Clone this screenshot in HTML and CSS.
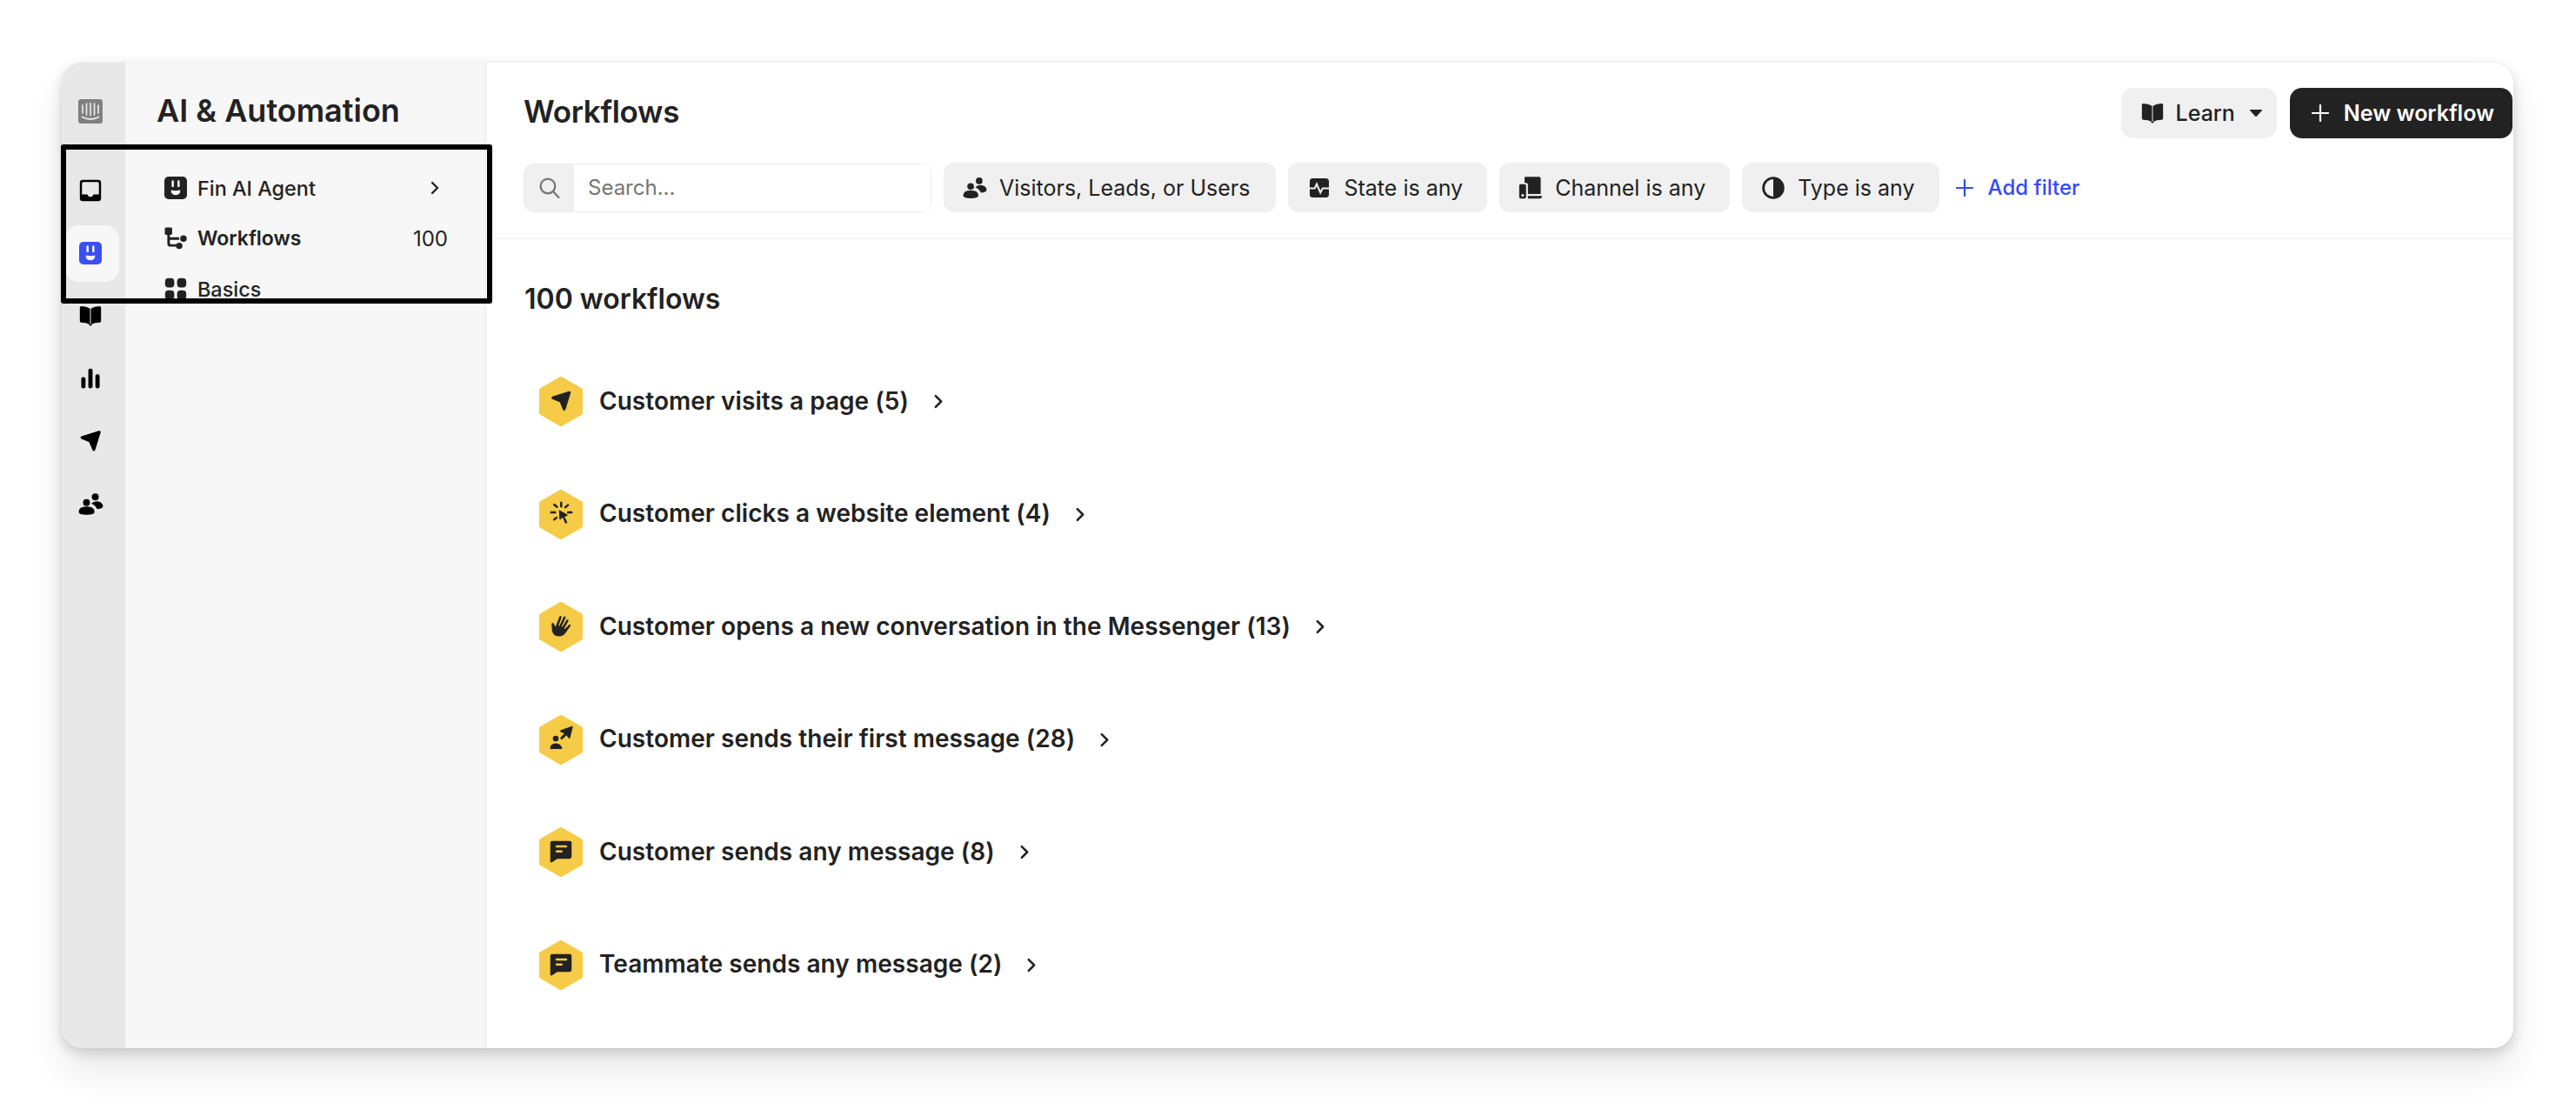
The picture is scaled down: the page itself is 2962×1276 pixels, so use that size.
FILE: index.html
```html
<!DOCTYPE html>
<html lang="en">
<head>
    <meta charset="UTF-8">
    <title>Workflows</title>
    <link rel="stylesheet" href="styles.css">
</head>
<body>
    <!-- Icon sprite -->
    <svg class="sprite" xmlns="http://www.w3.org/2000/svg">
        <symbol id="i-logo" viewBox="0 0 28 28">
            <rect width="28" height="28" rx="3" fill="#808080"/>
            <path d="M5 7v9M9.500 5v13M14 4.500v14M18.500 5v13M23 7v9" stroke="#e8e8e8" stroke-width="1.700" stroke-linecap="round" fill="none"/>
            <path d="M4.500 20.500q9.500 5 19 0" stroke="#e8e8e8" stroke-width="1.800" stroke-linecap="round" fill="none"/>
        </symbol>
        <symbol id="i-inbox" viewBox="0 0 16 16">
            <path fill-rule="evenodd" d="M2.500.5h11a2 2 0 0 1 2 2v11a2 2 0 0 1-2 2h-11a2 2 0 0 1-2-2v-11a2 2 0 0 1 2-2zM3 2a1 1 0 0 0-1 1v7.800h3.800q.6 1.700 2.200 1.700t2.200-1.700H14V3a1 1 0 0 0-1-1z"/>
        </symbol>
        <symbol id="i-fin" viewBox="0 0 16 16">
            <rect width="16" height="16" rx="3"/>
            <path fill="#fff" d="M5.200 3.400a.75.75 0 0 1 1.500 0v3.300a.75.75 0 0 1-1.500 0zM9.300 3.400a.75.75 0 0 1 1.500 0v3.300a.75.75 0 0 1-1.500 0zM4.800 9.500q3.200 1 6.400 0 .4 3.300-3.200 3.500-3.600-.2-3.200-3.500z"/>
        </symbol>
        <symbol id="i-book" viewBox="0 0 16 16">
            <path d="M.5 2.300q0-1 1-1 3.600 0 6.200 1.600v11.200q-2.800-1.400-6.200-1.400-1 0-1-1zM15.500 2.300q0-1-1-1-3.600 0-6.200 1.600v11.200q2.800-1.400 6.200-1.400 1 0 1-1z"/>
            <path d="M6.500 14h3L8 15.200z"/>
        </symbol>
        <symbol id="i-chart" viewBox="0 0 16 16">
            <rect x="1.500" y="7" width="3" height="8" rx="1.300"/>
            <rect x="6.500" y="1" width="3" height="14" rx="1.300"/>
            <rect x="11.500" y="5" width="3" height="10" rx="1.300"/>
        </symbol>
        <symbol id="i-send" viewBox="0 0 16 16">
            <path d="M14.200 1.800 2 5.600 7.800 8l2.600 6z" stroke="currentColor" stroke-width="2" stroke-linejoin="round"/>
        </symbol>
        <symbol id="i-people" viewBox="0 0 16 16">
            <circle cx="5.200" cy="7" r="2.200"/>
            <circle cx="10.800" cy="3.400" r="2.200"/>
            <path d="M.3 13q0-3.500 5-3.500t5 3.500q0 1.800-5 1.800t-5-1.800zM8.200 7.600q2.200-1.800 4.500-1.300 2.800.6 3 3 .1 1.700-3.800 1.900-.8-2.300-3.700-3.600z"/>
        </symbol>
        <symbol id="i-flow" viewBox="0 0 16 16">
            <rect x=".3" y=".3" width="5.200" height="5.200" rx="1"/>
            <path d="M3 5v6.500q0 1.500 1.500 1.500h4M3 8.200h7.500" stroke="currentColor" stroke-width="1.800" fill="none"/>
            <circle cx="13.500" cy="8.200" r="2.300"/>
            <circle cx="10.500" cy="13.300" r="2.300"/>
        </symbol>
        <symbol id="i-grid" viewBox="0 0 16 16">
            <rect x=".5" y=".5" width="6.500" height="6.500" rx="2.400"/>
            <rect x="9" y=".5" width="6.500" height="6.500" rx="2.400"/>
            <rect x=".5" y="9" width="6.500" height="6.500" rx="2.400"/>
            <rect x="9" y="9" width="6.500" height="6.500" rx="2.400"/>
        </symbol>
        <symbol id="i-state" viewBox="0 0 16 16">
            <rect x="1.700" y="1.700" width="12.600" height="12.600" rx="2"/>
            <path d="M1.700 8.300H5l1.300-2.800 2.400 5.600 1.500-2.800h4.100" stroke="#f0f0f0" stroke-width="1.200" fill="none"/>
        </symbol>
        <symbol id="i-channel" viewBox="0 0 16 16">
            <path d="M4 1.500q0-.8.800-.8h8.800q1 0 1 1V12H6.200V6q0-1.300-1.300-1.300H4z"/>
            <path d="M6.200 13.300h9.300q0 1.700-1.500 1.700H6.200z"/>
            <path fill-rule="evenodd" d="M1.500 5.500h2.500q1 0 1 1V14q0 1-1 1H1.500q-1 0-1-1V6.500q0-1 1-1zm1.250 6.500a.9.9 0 1 0 0 1.800.9.9 0 0 0 0-1.800z"/>
        </symbol>
        <symbol id="i-type" viewBox="0 0 16 16">
            <path fill-rule="evenodd" d="M8 .7a7.300 7.300 0 1 1 0 14.600A7.300 7.300 0 0 1 8 .7zm0 1.600v11.400a5.700 5.700 0 0 1 0-11.400z"/>
        </symbol>
        <symbol id="i-click" viewBox="0 0 24 24">
            <path d="M11.800 1v4.300M4.500 3.300l2.800 2.500M19 3.800l-2.800 2.300M1 11.600h4.300M19 11.600h4M4.300 19.200l2.600-2" stroke="currentColor" stroke-width="2.300" stroke-linecap="round" fill="none"/>
            <path d="M9.500 10.300q-.5-1 .6-1l8.200 4.500q1 .6.100 1.200l-3 1.100 2.700 5.700q.3 1.300-.9 1.400t-1.500-.9l-2.300-5.400-2.300 2.100q-1 .5-1.200-.7z"/>
        </symbol>
        <symbol id="i-wave" viewBox="0 0 27 27">
            <path d="M2.800 11.500q-.3-1.500 1-1.500t1.900 1.500l1.400 3.300L11.800 3q.7-1.500 1.700-1t.6 2l-3.400 9.300.9.500L16.500 3.500q.8-1.400 1.800-.8t.4 2L14.300 14l.9.600L20 6.800q.8-1.200 1.700-.6t.3 1.900l-4.700 8.300.9.700 4.300-4.700q1-1 1.700-.2t0 1.700l-5 7q-3 4.600-8.500 4.500-6-.2-7.500-6.500z"/>
        </symbol>
        <symbol id="i-first" viewBox="0 0 28 28">
            <circle cx="8" cy="15" r="3.300"/>
            <path d="M1.500 27q0-6.500 6.500-6.500t7.500 6.500z"/>
            <path d="M13.500 5.500 26.600.8q1.300-.3 1.100 1l-3.300 12.600q-.5 1.200-1.400.3l-2.700-3.400-4.400 4.300q-1 1-2 0t-.2-2l4.200-4.300-4.400-2.100q-1-.7 0-1.700z"/>
        </symbol>
        <symbol id="i-chat" viewBox="0 0 26 26">
            <path d="M3.500 0h19A3.500 3.500 0 0 1 26 3.500v14.500a3.500 3.500 0 0 1-3.500 3.500H8.500L2 26q-2 1-2-1.200V3.500A3.500 3.500 0 0 1 3.500 0z"/>
            <rect x="6.500" y="5.500" width="14" height="2.600" rx="1.300" fill="#f5cb47"/>
            <rect x="6.500" y="11.500" width="8.500" height="2.600" rx="1.300" fill="#f5cb47"/>
        </symbol>
    </svg>

    <div class="app">
        <nav class="rail">
            <svg class="rail-logo"><use href="#i-logo"/></svg>
            <div class="rail-items">
                <a class="rail-item"><svg><use href="#i-inbox"/></svg></a>
                <a class="rail-item active"><svg><use href="#i-fin"/></svg></a>
                <a class="rail-item"><svg><use href="#i-book"/></svg></a>
                <a class="rail-item"><svg><use href="#i-chart"/></svg></a>
                <a class="rail-item"><svg><use href="#i-send"/></svg></a>
                <a class="rail-item"><svg class="wide"><use href="#i-people"/></svg></a>
            </div>
        </nav>

        <aside class="panel">
            <h2 class="panel-title">AI &amp; Automation</h2>
            <a class="panel-item">
                <svg><use href="#i-fin"/></svg>
                <span class="panel-label">Fin AI Agent</span>
                <svg class="chev" viewBox="0 0 10 16"><path d="M2 2l6 6-6 6"/></svg>
            </a>
            <a class="panel-item current">
                <svg><use href="#i-flow"/></svg>
                <span class="panel-label">Workflows</span>
                <span class="panel-count">100</span>
            </a>
            <a class="panel-item">
                <svg><use href="#i-grid"/></svg>
                <span class="panel-label">Basics</span>
            </a>
        </aside>

        <main class="main">
            <header class="main-header">
                <div class="title-row">
                    <h1 class="page-title">Workflows</h1>
                    <div class="actions">
                        <button class="btn btn-light">
                            <svg class="btn-icon"><use href="#i-book"/></svg>
                            Learn
                            <svg class="caret" viewBox="0 0 16 10"><path d="M1.500 1h13q1 0 .4 1L9 8.500q-1 1-2 0L1.100 2q-.6-1 .4-1z"/></svg>
                        </button>
                        <button class="btn btn-dark">
                            <svg class="plus" viewBox="0 0 20 20"><path d="M10 1v18M1 10h18"/></svg>
                            New workflow
                        </button>
                    </div>
                </div>
                <div class="filters">
                    <div class="search">
                        <span class="search-icon">
                            <svg viewBox="0 0 24 24"><circle cx="10.500" cy="10.500" r="8"/><path d="M16.500 16.500l6 6.500"/></svg>
                        </span>
                        <input class="search-input" type="text" placeholder="Search...">
                    </div>
                    <div class="chip"><svg class="chip-icon"><use href="#i-people"/></svg>Visitors, Leads, or Users</div>
                    <div class="chip"><svg class="chip-icon"><use href="#i-state"/></svg>State is any</div>
                    <div class="chip"><svg class="chip-icon"><use href="#i-channel"/></svg>Channel is any</div>
                    <div class="chip"><svg class="chip-icon"><use href="#i-type"/></svg>Type is any</div>
                    <a class="add-filter">
                        <svg class="plus" viewBox="0 0 20 20"><path d="M10 1v18M1 10h18"/></svg>
                        Add filter
                    </a>
                </div>
            </header>

            <section class="content">
                <h3 class="count">100 workflows</h3>
                <ul class="groups">
                    <li class="group">
                        <svg class="hex" viewBox="0 0 50 57"><polygon points="25,2.500 47.500,15.500 47.500,41.500 25,54.500 2.500,41.500 2.500,15.500"/><use href="#i-send" x="12.500" y="15.500" width="25" height="25"/></svg>
                        <span class="group-name">Customer visits a page (5)</span>
                        <svg class="chev" viewBox="0 0 10 16"><path d="M2 2l6 6-6 6"/></svg>
                    </li>
                    <li class="group">
                        <svg class="hex" viewBox="0 0 50 57"><polygon points="25,2.500 47.500,15.500 47.500,41.500 25,54.500 2.500,41.500 2.500,15.500"/><use href="#i-click" x="12.500" y="13.500" width="26" height="26"/></svg>
                        <span class="group-name">Customer clicks a website element (4)</span>
                        <svg class="chev" viewBox="0 0 10 16"><path d="M2 2l6 6-6 6"/></svg>
                    </li>
                    <li class="group">
                        <svg class="hex" viewBox="0 0 50 57"><polygon points="25,2.500 47.500,15.500 47.500,41.500 25,54.500 2.500,41.500 2.500,15.500"/><use href="#i-wave" x="11.500" y="14" width="27" height="27"/></svg>
                        <span class="group-name">Customer opens a new conversation in the Messenger (13)</span>
                        <svg class="chev" viewBox="0 0 10 16"><path d="M2 2l6 6-6 6"/></svg>
                    </li>
                    <li class="group">
                        <svg class="hex" viewBox="0 0 50 57"><polygon points="25,2.500 47.500,15.500 47.500,41.500 25,54.500 2.500,41.500 2.500,15.500"/><use href="#i-first" x="11" y="12" width="28" height="28"/></svg>
                        <span class="group-name">Customer sends their first message (28)</span>
                        <svg class="chev" viewBox="0 0 10 16"><path d="M2 2l6 6-6 6"/></svg>
                    </li>
                    <li class="group">
                        <svg class="hex" viewBox="0 0 50 57"><polygon points="25,2.500 47.500,15.500 47.500,41.500 25,54.500 2.500,41.500 2.500,15.500"/><use href="#i-chat" x="12.500" y="15.500" width="25" height="25"/></svg>
                        <span class="group-name">Customer sends any message (8)</span>
                        <svg class="chev" viewBox="0 0 10 16"><path d="M2 2l6 6-6 6"/></svg>
                    </li>
                    <li class="group">
                        <svg class="hex" viewBox="0 0 50 57"><polygon points="25,2.500 47.500,15.500 47.500,41.500 25,54.500 2.500,41.500 2.500,15.500"/><use href="#i-chat" x="12.500" y="15.500" width="25" height="25"/></svg>
                        <span class="group-name">Teammate sends any message (2)</span>
                        <svg class="chev" viewBox="0 0 10 16"><path d="M2 2l6 6-6 6"/></svg>
                    </li>
                </ul>
            </section>
        </main>

        <!-- Annotation drawn over the screenshot -->
        <div class="highlight"></div>
    </div>
</body>
</html>
```

FILE: styles.css
```css
* {
    box-sizing: border-box;
}

body {
    margin: 0;
    padding: 72px 72px 71px 71px;
    height: 1276px;
    overflow: hidden;
    background: #fff;
    font-family: 'Inter', 'Liberation Sans', sans-serif;
    color: #222;
}

svg {
    fill: currentColor;
}

.sprite {
    display: none;
}

/* Window */
.app {
    position: relative;
    display: flex;
    height: 100%;
    background: #fff;
    border-radius: 24px;
    box-shadow: 0 26px 44px rgba(0, 0, 0, 0.09), 0 5px 14px rgba(0, 0, 0, 0.16), 0 0 3px rgba(0, 0, 0, 0.05);
}

.highlight {
    position: absolute;
    left: -1px;
    top: 94px;
    width: 496px;
    height: 183px;
    border: 6px solid #000;
    border-radius: 3px;
}

/* Icon rail */
.rail {
    width: 73px;
    flex-shrink: 0;
    padding-top: 42px;
    background: #e8e8e8;
    border-radius: 24px 0 0 24px;
    color: #000;
}

.rail-logo {
    display: block;
    width: 28px;
    height: 28px;
    margin: 0 0 0 19px;
}

.rail-items {
    margin-top: 41px;
}

.rail-item {
    display: flex;
    align-items: center;
    justify-content: center;
    width: 66px;
    height: 72px;
}

.rail-item svg {
    width: 26px;
    height: 26px;
}

.rail-item svg.wide {
    width: 29px;
    height: 29px;
}

.rail-item.active {
    color: #3a4ff5;
    position: relative;
}

.rail-item.active::before {
    content: "";
    position: absolute;
    left: 4px;
    top: 4px;
    right: 0;
    bottom: 3px;
    background: #f7f7f7;
    border-radius: 16px;
}

.rail-item.active svg {
    position: relative;
}

/* Side panel */
.panel {
    width: 415px;
    flex-shrink: 0;
    padding: 0 43px 0 36px;
    background: #f7f7f7;
    border-right: 1px solid #e8e8e8;
}

.panel-title {
    margin: 33px 0 38px;
    font-size: 36px;
    line-height: 44px;
    font-weight: 600;
}

.panel-item {
    display: flex;
    align-items: center;
    gap: 12px;
    height: 58px;
    padding-left: 9px;
    font-size: 23.400px;
    font-weight: 500;
}

.panel-item svg {
    width: 26px;
    height: 26px;
    flex-shrink: 0;
}

.panel-item.current {
    font-size: 23px;
    font-weight: 600;
}

.panel-label {
    flex: 1;
}

.panel-count {
    font-size: 24px;
    font-weight: 400;
}

.panel-item .chev {
    width: 10px;
    height: 16px;
    margin-right: 10px;
}

.chev path {
    fill: none;
    stroke: #222;
    stroke-width: 2.400;
    stroke-linecap: round;
    stroke-linejoin: round;
}

/* Main area */
.main {
    flex: 1;
    min-width: 0;
}

.main-header {
    padding: 29px 1px 30px 43px;
    border-bottom: 1px solid #f0f0f0;
}

.title-row {
    display: flex;
    align-items: center;
    justify-content: space-between;
    height: 58px;
}

.page-title {
    margin: 0 0 5px;
    font-size: 35px;
    font-weight: 600;
    letter-spacing: -0.300px;
}

.actions {
    display: flex;
    gap: 15px;
}

.btn {
    display: flex;
    align-items: center;
    height: 58px;
    border: 0;
    border-radius: 14px;
    font-family: inherit;
    font-size: 25px;
    font-weight: 500;
}

.btn-light {
    gap: 14px;
    padding: 0 16px 0 23px;
    background: #f0f0f0;
    color: #222;
}

.btn-icon {
    width: 26px;
    height: 26px;
}

.caret {
    width: 16px;
    height: 10px;
    margin-left: 2px;
}

.btn-dark {
    gap: 17px;
    padding: 0 21px 0 25px;
    background: #222;
    color: #fff;
    font-weight: 600;
}

.plus {
    width: 20px;
    height: 20px;
    fill: none;
    stroke: currentColor;
    stroke-width: 2.200;
    stroke-linecap: round;
}

/* Filters */
.filters {
    display: flex;
    align-items: center;
    gap: 14px;
    margin-top: 28px;
    height: 57px;
}

.search {
    display: flex;
    width: 469px;
    height: 56px;
    background: #fff;
    border: 1px solid #ececec;
    border-radius: 12px;
    overflow: hidden;
}

.search-icon {
    display: flex;
    align-items: center;
    justify-content: center;
    width: 57px;
    background: #f0f0f0;
}

.search-icon svg {
    width: 25px;
    height: 25px;
    fill: none;
    stroke: #777;
    stroke-width: 2.200;
    stroke-linecap: round;
}

.search-input {
    flex: 1;
    min-width: 0;
    padding: 0 16px;
    border: 0;
    outline: 0;
    font-family: inherit;
    font-size: 24px;
    color: #222;
}

.search-input::placeholder {
    color: #757575;
    opacity: 1;
}

.chip {
    display: flex;
    align-items: center;
    gap: 14px;
    height: 57px;
    padding: 0 28px 0 22px;
    background: #f0f0f0;
    border-radius: 12px;
    font-size: 25px;
    white-space: nowrap;
}

.chip:nth-child(2) {
    padding-right: 30px;
}

.chip-icon {
    width: 28px;
    height: 28px;
}

.add-filter {
    display: flex;
    align-items: center;
    gap: 17px;
    margin-left: 5px;
    color: #334bfa;
    font-size: 24px;
    font-weight: 500;
}

/* Workflow groups */
.content {
    padding: 49px 0 0 44px;
}

.count {
    margin: 0 0 69px;
    font-size: 32px;
    line-height: 40px;
    font-weight: 600;
}

.groups {
    display: flex;
    flex-direction: column;
    gap: 72.600px;
    margin: 0;
    padding: 0 0 0 17px;
    list-style: none;
}

.group {
    display: flex;
    align-items: center;
    height: 57px;
}

.hex {
    width: 50px;
    height: 57px;
    margin-right: 19px;
    color: #222;
}

.hex polygon {
    fill: #f5cb47;
    stroke: #f5cb47;
    stroke-width: 5;
    stroke-linejoin: round;
}

.group-name {
    padding-bottom: 2px;
    font-size: 28px;
    font-weight: 600;
    letter-spacing: 0.040px;
}

.group .chev {
    width: 12px;
    height: 17px;
    margin-left: 28px;
}
```
